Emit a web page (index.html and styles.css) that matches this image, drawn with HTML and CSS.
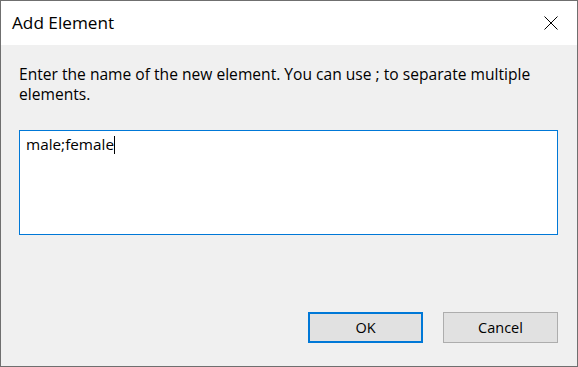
FILE: index.html
```html
<!DOCTYPE html>
<html>
<head>
<meta charset="utf-8">
<link rel="stylesheet" href="styles.css">
</head>
<body>
<div class="window">
  <div class="titlebar">
    <span class="title">Add Element</span>
    <span class="close">
      <svg width="14" height="14" viewBox="0 0 14 14"><path d="M0.5 0.5 L13.5 13.5 M13.5 0.5 L0.5 13.5" stroke="#000" stroke-width="1" fill="none"/></svg>
    </span>
  </div>
  <div class="content">
    <p class="prompt">Enter the name of the new element. You can use ; to separate multiple elements.</p>
    <div class="input"><span class="value">male;female</span><span class="caret"></span></div>
    <div class="buttons">
      <button class="btn default">OK</button>
      <button class="btn">Cancel</button>
    </div>
  </div>
</div>
</body>
</html>
```
FILE: styles.css
```css
html, body {
  margin: 0;
  padding: 0;
  background: #f0f0f0;
}
.window {
  box-sizing: border-box;
  width: 578px;
  height: 367px;
  border: 1px solid #6f6f6f;
  background: #f0f0f0;
  display: flex;
  flex-direction: column;
  font-family: "Open Sans", "Noto Sans", sans-serif;
  color: #000;
}
.titlebar {
  height: 44px;
  background: #fff;
  display: flex;
  align-items: center;
  justify-content: space-between;
  padding: 0 0 0 11px;
}
.title {
  font-size: 17.2px;
  margin-top: -1px;
}
.close {
  width: 46px;
  height: 44px;
  display: flex;
  align-items: center;
  justify-content: center;
  margin-right: 3px;
}
.close svg { display: block; }
.content {
  flex: 1;
  padding: 19px 19px 0 18px;
  display: flex;
  flex-direction: column;
}
.prompt {
  margin: 0;
  font-size: 15.6px;
  line-height: 20px;
}
.input {
  margin-top: 26px;
  height: 105px;
  box-sizing: border-box;
  border: 1px solid #0078d7;
  background: #fff;
  padding: 3px 6px;
  font-size: 15.3px;
  line-height: 20px;
  display: flex;
  align-items: flex-start;
}
.caret {
  display: inline-block;
  width: 1px;
  height: 18px;
  background: #000;
  margin-top: 2px;
}
.buttons {
  margin-top: auto;
  margin-bottom: 23px;
  display: flex;
  justify-content: flex-end;
  gap: 20px;
}
.btn {
  box-sizing: border-box;
  width: 115px;
  height: 31px;
  background: #e1e1e1;
  border: 1px solid #adadad;
  font-family: "Open Sans", "Noto Sans", sans-serif;
  font-size: 14.5px;
  color: #000;
  padding: 0;
}
.btn.default {
  border: 2px solid #0078d7;
}
```
